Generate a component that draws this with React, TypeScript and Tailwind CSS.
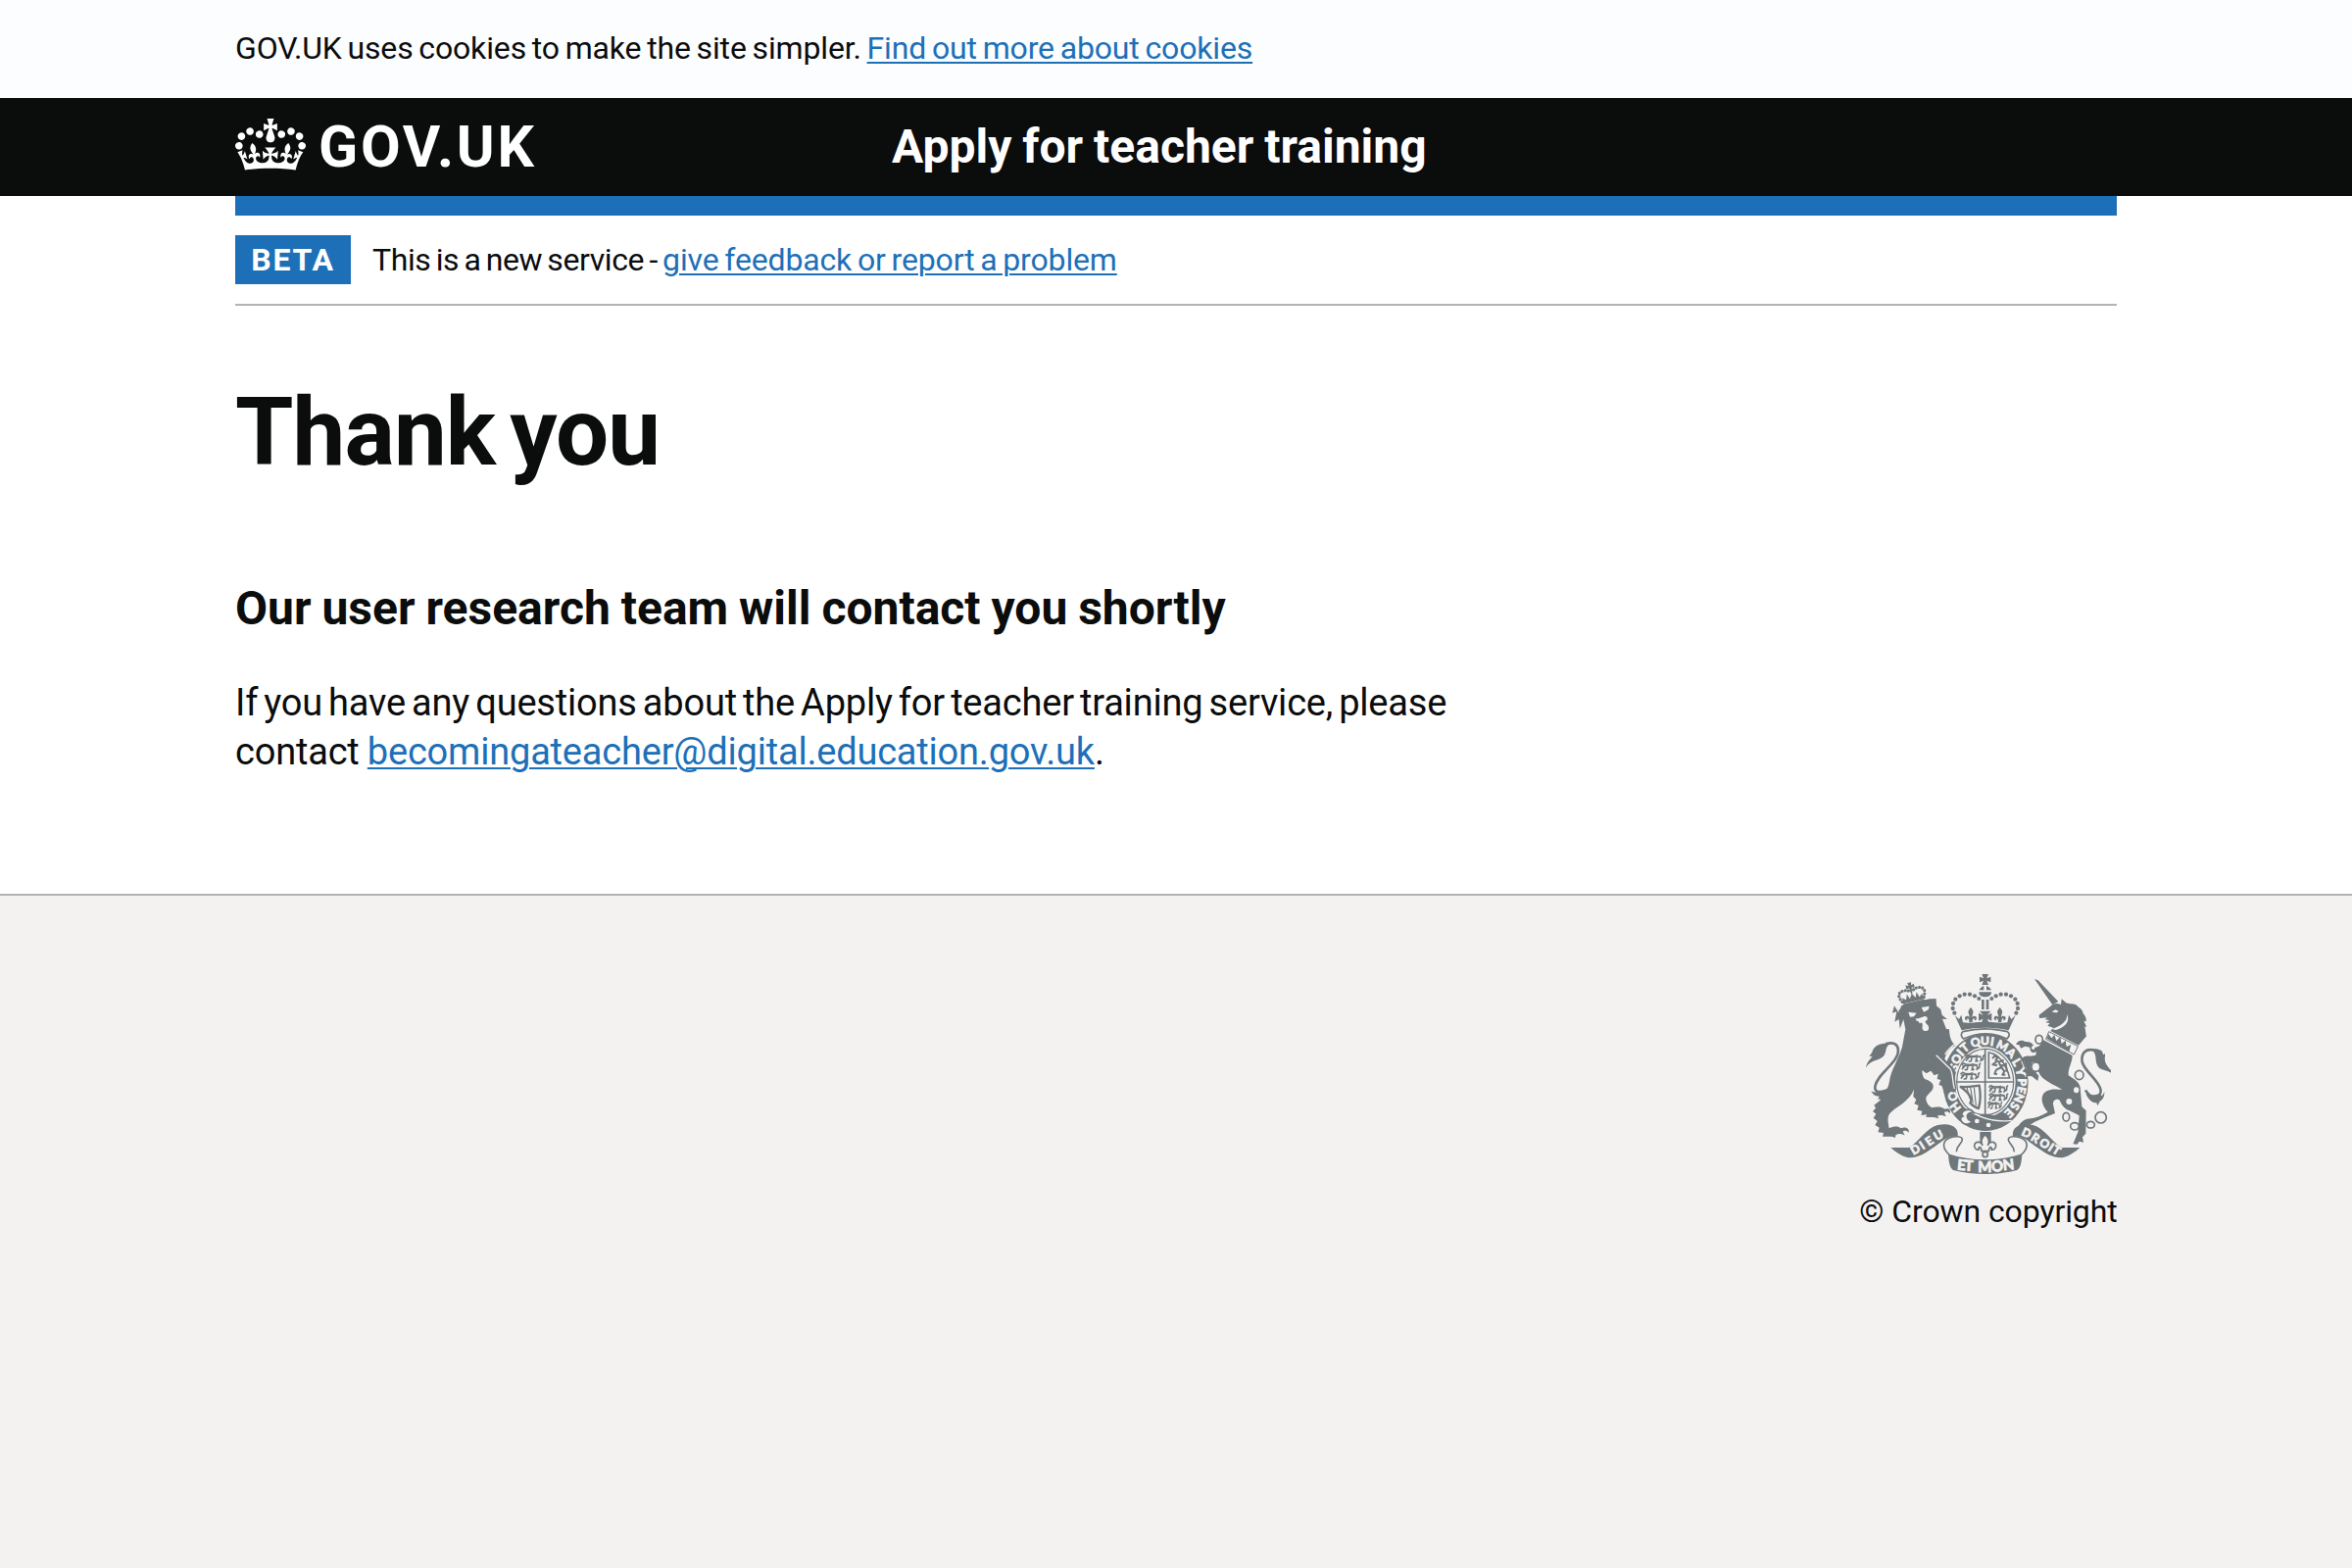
import React from "react";

const INK = "#6f777b";
const PAPER = "#f3f2f1";

function Crown() {
  return (
    <svg viewBox="0 0 132 97" className="mb-[5px] h-[53px] w-[72px] shrink-0" fill="currentColor" aria-hidden="true">
      <path d="M25 30.2c3.5 1.5 7.7-.2 9.1-3.7 1.5-3.6-.2-7.8-3.9-9.2-3.6-1.4-7.6.3-9.1 3.9-1.4 3.5.3 7.5 3.9 9zM9 39.5c3.6 1.5 7.8-.2 9.2-3.7 1.5-3.6-.2-7.8-3.9-9.1-3.6-1.5-7.6.2-9.1 3.8-1.4 3.5.3 7.5 3.8 9zM4.4 57.2c3.5 1.5 7.7-.2 9.1-3.8 1.5-3.6-.2-7.7-3.9-9.1-3.5-1.5-7.6.3-9.1 3.8-1.4 3.5.3 7.6 3.9 9.1zm38.3-21.4c3.5 1.5 7.7-.2 9.1-3.8 1.5-3.6-.2-7.7-3.9-9.1-3.6-1.5-7.6.3-9.1 3.8-1.3 3.6.4 7.7 3.9 9.1zm64.4-5.6c-3.6 1.5-7.8-.2-9.1-3.7-1.5-3.6.2-7.8 3.8-9.2 3.6-1.4 7.7.3 9.2 3.9 1.3 3.5-.4 7.5-3.9 9zm15.9 9.3c-3.6 1.5-7.7-.2-9.1-3.7-1.5-3.6.2-7.8 3.7-9.1 3.6-1.5 7.7.2 9.2 3.8 1.5 3.5-.3 7.5-3.8 9zm4.7 17.7c-3.6 1.5-7.8-.2-9.2-3.8-1.5-3.6.2-7.7 3.9-9.1 3.6-1.5 7.7.3 9.2 3.8 1.3 3.5-.4 7.6-3.9 9.1zM89.3 35.8c-3.6 1.5-7.8-.2-9.2-3.8-1.4-3.6.2-7.7 3.9-9.1 3.6-1.5 7.7.3 9.2 3.8 1.4 3.6-.3 7.7-3.9 9.1zM69.7 17.7l8.9 4.7V9.3l-8.9 2.8c-.2-.3-.5-.6-.9-.9L72.4 0H59.6l3.5 11.2c-.3.3-.6.5-.9.9l-8.8-2.8v13.1l8.8-4.7c.3.3.6.7.9.9l-5 15.4v.1c-.2.8-.4 1.6-.4 2.4 0 4.1 3.1 7.5 7 8.1h.2c.3 0 .7.1 1 .1.4 0 .7 0 1-.1h.2c4-.6 7.1-4.1 7.1-8.1 0-.8-.1-1.7-.4-2.4V34l-5.1-15.4c.4-.2.7-.6 1-.9zM66 92.8c16.9 0 32.8 1.1 47.1 3.2 4-16.9 8.9-26.7 14-33.5l-9.6-3.4c1 4.9 1.1 7.2 0 10.2-1.5-1.4-3-4.3-4.2-8.7L108.6 76c2.8-2 5-3.2 7.5-3.3-4.4 9.4-10 11.9-13.6 11.2-4.3-.8-6.3-4.6-5.6-7.9 1-4.7 5.7-5.9 8-.5 4.3-8.7-3-11.4-7.6-8.8 7.1-7.2 7.9-13.5 2.1-21.1-8 6.1-8.1 12.3-4.5 20.8-4.7-5.4-12.1-2.5-9.5 6.2 3.4-5.2 7.9-2 7.2 3.1-.6 4.3-6.4 7.8-13.5 7.2-10.3-.9-10.9-8-11.2-13.8 2.5-.5 7.1 1.8 11 7.3L80.2 60c-4.1 4.4-8 5.3-12.3 5.4 1.4-4.4 8-11.6 8-11.6H55.5s6.4 7.2 7.9 11.6c-4.2-.1-8-1-12.3-5.4l1.4 16.4c3.9-5.5 8.5-7.7 10.9-7.3-.3 5.8-.9 12.8-11.1 13.8-7.2.6-12.9-2.9-13.5-7.2-.7-5 3.8-8.3 7.1-3.1 2.7-8.7-4.6-11.6-9.4-6.2 3.7-8.5 3.6-14.7-4.6-20.8-5.8 7.6-5 13.9 2.2 21.1-4.7-2.6-11.9.1-7.7 8.8 2.3-5.5 7.1-4.2 8.1.5.7 3.3-1.3 7.1-5.7 7.9-3.5.7-9-1.8-13.5-11.2 2.5.1 4.7 1.3 7.5 3.3l-4.7-15.4c-1.2 4.4-2.7 7.2-4.3 8.7-1.1-3-.9-5.3 0-10.2l-9.5 3.4c5 6.9 9.9 16.7 14 33.5 14.8-2.1 30.8-3.2 47.7-3.2z" />
    </svg>
  );
}

type Glyph = [string, number, number, number];

// Letter, centre x, centre y, rotation in degrees
const garter: Glyph[] = [
  ["H", 346, 479, -128], ["O", 338, 446, -112],
  ["S", 341, 358, -68], ["O", 349, 332, -57], ["I", 361, 312, -47], ["T", 374, 297, -38],
  ["Q", 407, 280, -14], ["U", 436, 275, 0], ["I", 459, 278, 9],
  ["M", 490, 291, 26], ["A", 517, 313, 42], ["L", 534, 341, 60],
  ["Y", 546, 371, 76], ["P", 550, 403, 92], ["E", 548, 427, 103], ["N", 541, 451, 112], ["S", 528, 476, 122], ["E", 511, 497, 134],
];
const sideMottoes: Glyph[] = [
  ["D", 223, 608, -30], ["I", 244, 596, -32], ["E", 266, 583, -35], ["U", 294, 565, -28],
  ["D", 564, 558, 24], ["R", 591, 573, 32], ["O", 619, 590, 33], ["I", 639, 602, 33], ["T", 656, 611, 31],
];
const baseMotto: Glyph[] = [
  ["E", 365, 656, 6], ["T", 387, 658, 3], ["M", 436, 661, 0], ["O", 474, 659, -3], ["N", 508, 655, -6],
];

function Letters({ glyphs, size }: { glyphs: Glyph[]; size: number }) {
  return (
    <g fill={PAPER} stroke={PAPER} strokeWidth="2.5" fontFamily="Lato, sans-serif" fontWeight={700} fontSize={size} textAnchor="middle">
      {glyphs.map(([ch, x, y, r], i) => (
        <text key={i} transform={`translate(${x} ${y}) rotate(${r})`} y={size * 0.36}>{ch}</text>
      ))}
    </g>
  );
}

const beads: [number, number][] = [
  [405, 139], [390, 134], [374, 134], [359, 139], [346, 149], [339, 162], [338, 177], [343, 191],
];
const lionCrownBeads: [number, number][] = [
  [179, 150], [175, 141], [173, 131], [177, 122], [186, 118], [196, 118], [205, 121],
  [221, 121], [230, 118], [240, 118], [249, 122], [253, 131], [251, 141], [247, 150],
];

function Passant({ x, y }: { x: number; y: number }) {
  return (
    <g transform={`translate(${x} ${y})`} fill="none" stroke={INK} strokeWidth="5" strokeLinecap="round" strokeLinejoin="round">
      <path d="M0 4l5-4 6 3M3 9c12-5 24-1 42-4M8 9l-7 8M18 9l-2 10-6 1M34 8l-3 7 5 4-6 1M44 6l4 8-3 5M50 16c8-3-2-11 6-15" />
      <path d="M14 3l10 1 12-2" strokeWidth="4" />
    </g>
  );
}

function SmallFleur({ x, y }: { x: number; y: number }) {
  return (
    <path
      transform={`translate(${x} ${y})`}
      d="M0-22c6 7 10 12 6 20-1 4-2 6-2 10 4-6 14-5 14 3 0 5-4 8-8 6 2 0 3-6-1-5-3 1-4 5-4 12H-5c0-7-1-11-4-12-4-1-3 5-1 5-4 2-8-1-8-6 0-8 10-9 14-3 0-4-1-6-2-10-4-8 0-13 6-20z"
    />
  );
}

function CoatOfArms() {
  return (
    <svg viewBox="72 72 750 612" className="h-[204px] w-[250px]" fill={INK} aria-hidden="true">
      {/* Royal crown */}
      <path d="M427 72h20l-5 13 12-5v17l-12-5 5 13h-20l5-13-12 5V80l12 5z" />
      <path d="M433 108v13h-14c2-6 7-10 14-13zm8 0c7 3 12 7 15 13h-15zM418 127h38c1 9-8 15-19 15s-20-6-19-15z" />
      <path d="M426 150h8v30h-8zm14 0h8v30h-8z" />
      {beads.map(([x, y]) => (
        <g key={`${x}-${y}`}>
          <circle cx={x} cy={y} r="6.4" />
          <circle cx={875 - x} cy={y} r="6.4" />
        </g>
      ))}
      <circle cx="418" cy="147" r="6" />
      <circle cx="457" cy="147" r="6" />
      <path d="M420 185h34l-11 13 14-7v24l-13-6 6 19h-26l6-19-13 6v-24l14 7z" />
      <SmallFleur x={393} y={196} />
      <SmallFleur x={482} y={196} />
      <path d="M344 198l13 12 7-13 5 23c22 4 36-2 68-2s46 6 68 2l5-23 7 13 13-12-21 46c-48-10-96-10-144 0z" />
      <path d="M369 248c44-11 92-11 136 0 10 7 5 16-2 22-40-20-88-20-132 0-8-6-10-15-2-22z" fill={PAPER} stroke={INK} strokeWidth="5" />

      {/* Garter and shield */}
      <ellipse cx="438" cy="403" rx="131" ry="149" />
      <ellipse cx="437" cy="402" rx="93" ry="107" fill={PAPER} />
      <ellipse cx="437" cy="402" rx="87" ry="101" fill="none" stroke={INK} strokeWidth="3.5" />
      <path d="M437 300v205M349 402h176" fill="none" stroke={INK} strokeWidth="5" />
      <Passant x={378} y={319} />
      <Passant x={366} y={345} />
      <Passant x={363} y={373} />
      <Passant x={450} y={413} />
      <Passant x={450} y={438} />
      <g transform="translate(446 463) scale(.75 1)"><Passant x={0} y={0} /></g>
      <path d="M448 390V312c26 4 52 28 64 78z" fill="none" stroke={INK} strokeWidth="5" />
      <path d="M459 330l8-8 8 7-6 6 12 6 13-6M473 339l-13 10 14 3M478 342l9 15-16 8-5 12 8 1M488 358l8 12-6 10 9 0M484 350l17 3M500 370c8-8-4-18 2-26" fill="none" stroke={INK} strokeWidth="6" strokeLinejoin="round" />
      <path d="M362 417c18 2 40-2 57-4 4 22 4 48-2 70-10-2-18-8-26-16 10-15-10-36-29-50z" fill="none" stroke={INK} strokeWidth="7" strokeLinejoin="round" />
      <path d="M381 419l9 34M392 419l8 48M403 418l6 56" fill="none" stroke={INK} strokeWidth="3.5" />
      <path d="M428 500h20l22 6-30 10-28-9z" />
      <path d="M386 488c38 27 80 38 132 32" fill="none" stroke={PAPER} strokeWidth="4" />
      <circle cx="412" cy="522" r="7" fill={PAPER} />
      <circle cx="447" cy="534" r="7" fill={PAPER} />
      <path d="M378 488c12-4 20 2 24 9-13-3-21 4-20 11s6 12 14 14c-4 10-20 13-29 4-9-10-5-16 2-19-8-5-1-17 9-19z" fill={PAPER} stroke={INK} strokeWidth="5" />
      <Letters glyphs={garter} size={36} />

      {/* Lion */}
      <path d="M172 190l9-22 85-20h20l1 20 14 12 4 17 16 13-15-1 12 31 9 1c1 24 6 40 20 50-18 6-28 20-34 41l27 28c7 18 4 41 9 62l-7 13-11-6-6 6-6-9-10 2-4-13-10-5 6-14-11-3 3-16-12 5-10-14-14 8-13-10c0 12 2 20 8 27 17 5 28 14 26 26-4 15-20 21-22 32-1 13 9 26 18 30 12-3 27-5 40 4 13-5 18 4 16 14-7-8-14-7-18-4l5 13c-12-5-19-5-27-2 4 3 5 5 4 8-10-5-20-4-38-4l2-8-17 2 3-13-15-3 4-14-13-5 6-13-9-9 2-22c-15 38-55 53-73 72-11 12-5 33-3 47 14-6 27-8 36 0 17-7 27 3 24 13-6-7-13-7-18-4l6 13c-11-6-20-6-28-1l-1 8c-12-7-27-2-39-4l3-11-17-2 4-14-13-8 7-12-12-10 8-12-10-8 9-10-5-9 19-15-2-12c17-11 27-24 30-46 5-36 28-66 39-105l10-54-6-30-11 28-3-29-13 8 6-31-13 4 6-22z" />
      <path d="M172 183l20-14 94-22 2 24-60 20-50 15z" />
      <path d="M202 188l25 3-8 11-12 1zm40-14l24-4-3 11-14 7z" fill={PAPER} />
      <path d="M224 208c8 2 18-5 28-7 8 0 10 7 7 13-7-2-6 5-1 11 9 6 9 20-1 21-10 2-14-6-12-14 2-10-4-14-7-9-5-1-2-7-8-7-4 0-5-4-6-8z" fill={PAPER} />
      <path d="M287 320l43 42c9 10 6 38 13 61" fill="none" stroke={PAPER} strokeWidth="4" />
      <path d="M314 318c10-17 22-28 38-35" fill="none" stroke={PAPER} strokeWidth="4" />
      <g transform="rotate(-13 213 135)">
        <path d="M180 157h68v8h-68z" />
        {lionCrownBeads.map(([x, y]) => (
          <circle key={`${x}-${y}`} cx={x} cy={y} r="4.8" />
        ))}
        <path d="M207 97h12l-2 9 9-3v13l-9-3-2 19h-4l-2-19-9 3v-13l9 3zM181 156l1-18 10 9 6-17 6 16 9-15 9 15 6-16 6 17 10-9 1 18z" />
      </g>
      {/* Lion's tail */}
      <path d="M132 286c29-9 42 4 38 28-4 32-64 64-70 102-2 18 12 22 47 7" fill="none" stroke={INK} strokeWidth="8" />
      <path d="M146 286c-28-7-50 4-55 25l-9 13 10-1c-7 10-18 18-20 36 16-28 45-20 57-40 7-14 2-25 17-33zM88 430c13 8 26-1 35 2l24-10-5 22c-9 10-22 7-34 12l5-10c-9 1-19-3-25-16z" />

      {/* Unicorn */}
      <path d="M588 87l11 4 62 65-18 10z" />
      <path d="M603 207l-1-10 37-28c8-8 18-8 30-4l2-17 14 12c8 4 20 3 29 5l11 10c8 4 11 11 12 18 7 7 10 15 9 24l-7-1 9 18-6-2 5 33-9-4-7 5-10-11-10 6-12-13-40-12c18-3 35-15 38-33-16 15-34 21-48 35l-21-8 7-8-13-2 12-7-14-2 7-6z" />
      <path d="M642 240l50-38 40 10 13 52-22 26-86-44z" />
      <path d="M641 187l12-6 9 5-6 4-9-1z" fill={PAPER} />
      <path d="M640 240c28-8 51-24 47-45 12 20-6 42-34 48z" fill={PAPER} />
      <path d="M632 248l89 45-12 25-86-47z" fill={PAPER} stroke={INK} strokeWidth="3" />
      <path d="M626 269l5-14 9 13 9-10 6 18 12-12 4 21 12-10 3 19 14-6-6 22z" />
      <path d="M616 274l88 47c0 22-14 39-12 61 14 11 38 18 37 48l4 48 13 12-1 70-10 11 3 16-13-3-6 9-13-1 15-36 4-51-30-15c-18-5-25-22-31-33-8-5-20 1-19 13l6 28-35 14-27 12-14 9-3 8-36 2c9-20 25-29 42-29 25-5 38-13 51-20-22-23-26-58 1-66 13-6 31-3 43-3-24-14-65-29-72-53l-15-23c4-23 6-37 15-55z" />
      <path d="M612 306l-29 7c-8-4-9-11-9-17l-15-3-13 6-5-10-10-2c7-15 20-14 29-8 17-2 24 7 29 18l26-9zM612 337l-31 5-5 16 13 10 12 16-3 15-18-14-13-1-13-20 9-3-7-22-8 0c0-15 15-17 27-16l32-5z" />
      <path d="M548 338l9 24-9 4 14 21M536 292l11 9" fill="none" stroke={PAPER} strokeWidth="3" />
      <g fill="none" stroke={INK} strokeWidth="5">
        <ellipse cx="602" cy="272" rx="11" ry="13" />
        <ellipse cx="592" cy="356" rx="13" ry="14" fill={PAPER} />
        <ellipse cx="725" cy="381" rx="13" ry="14" fill={PAPER} />
        <ellipse cx="685" cy="509" rx="10" ry="13" />
        <ellipse cx="711" cy="538" rx="13" ry="11" />
        <ellipse cx="760" cy="533" rx="12" ry="10" />
        <circle cx="791" cy="511" r="17" />
      </g>
      <ellipse cx="716" cy="427" rx="8" ry="9" fill={PAPER} />
      <ellipse cx="694" cy="462" rx="9" ry="9" fill={PAPER} />
      <ellipse cx="584" cy="297" rx="5" ry="6" fill={PAPER} />
      {/* Unicorn's tail */}
      <path d="M775 306c-30-9-45 7-41 35 7 29 54 59 57 87 0 15-6 18-22 18-10 1-17-6-25-19" fill="none" stroke={INK} strokeWidth="8" />
      <path d="M765 305c9-9 23-2 29 2l5 12 5-4c1 18-7 24 18 51v8c-14-9-27-8-36-15-16-14-4-41-21-54zM745 437l21 8 20-7 9 7 7-12c1 17-8 25-14 29l-7 13-3-9c-12 0-24-7-33-29z" />

      {/* Scroll */}
      <path d="M148 603H203C230 590 258 542 292 534C332 525 358 540 353 571C323 562 302 588 277 604C250 624 225 637 198 633C180 628 162 617 148 603z" />
      <path d="M727 603H672C645 590 617 542 583 534C543 525 517 540 522 571C552 562 573 588 598 604C625 624 650 637 677 633C695 628 713 617 727 603z" />
      <path d="M324 622c70 24 156 24 226 0-2 28-4 42-15 50-60 16-136 16-196 0-11-8-13-24-15-50z" />
      <path d="M328 625c-22-18-23-40-4-50 20-9 43-7 43 3 0 14-18 17-18 38M547 625c22-18 23-40 4-50-20-9-43-7-43 3 0 14 18 17 18 38" fill={PAPER} stroke={INK} strokeWidth="5" />
      <Letters glyphs={sideMottoes} size={36} />
      <Letters glyphs={baseMotto} size={45} />
      <path d="M421 555h34v36h-34z" />
      <path d="M437 563c12 12 14 20 8 34 4-15 24-14 25 0 0 9-7 14-14 12 2-5 0-8-4-7-4 2-3 8-4 12h-22c-1-4 0-10-4-12-4-1-6 2-4 7-7 2-14-3-14-12 1-14 21-15 25 0-6-14-4-22 8-34z" fill={PAPER} stroke={INK} strokeWidth="5" />
      <circle cx="437" cy="624" r="8" fill={PAPER} stroke={INK} strokeWidth="5" />
    </svg>
  );
}

const link = "text-[#1d70b8] underline decoration-2 underline-offset-[3px]";

export default function App() {
  return (
    <div className="flex min-h-[1600px] w-[2400px] flex-col bg-white font-['Roboto',sans-serif] text-[#0b0c0c]">
      <div className="flex h-[100px] items-center bg-[#fcfdff] px-[240px] pb-0.5">
        <p className="whitespace-nowrap text-[32px] leading-[40px] tracking-[-0.15px] [word-spacing:-2px]">
          GOV.UK uses cookies to make the site simpler.{" "}
          <a href="#" className={link}>Find out more about cookies</a>
        </p>
      </div>

      <header className="h-[100px] bg-[#0b0c0c] px-[240px] text-white">
        <div className="flex h-full items-center">
          <a href="#" className="flex w-[670px] items-center">
            <Crown />
            <span className="mb-0.5 ml-[13px] whitespace-nowrap text-[59px] font-bold leading-none tracking-[2.8px]">GOV.UK</span>
          </a>
          <a href="#" className="whitespace-nowrap text-[48px] font-bold leading-none [word-spacing:-1px]">Apply for teacher training</a>
        </div>
      </header>

      <div className="mx-[240px] h-5 bg-[#1d70b8]" />

      <div className="mx-[240px] flex h-[92px] items-center border-b-2 border-[#b1b4b6]">
        <strong className="flex h-[50px] w-[118px] items-center justify-center bg-[#1d70b8] text-[32px] font-bold leading-none tracking-[1.8px] text-white">BETA</strong>
        <span className="ml-[22px] whitespace-nowrap text-[32px] leading-[40px]">
          <span className="tracking-[-0.4px] [word-spacing:-2.3px]">This is a new service - </span>
          <a href="#" className={`${link} tracking-[-0.15px] [word-spacing:-2px]`}>give feedback or report a problem</a>
        </span>
      </div>

      <main className="mx-[240px] h-[600px] pt-[79px]">
        <h1 className="text-[96px] font-bold leading-[100px] tracking-[-0.9px] [word-spacing:-8px]">Thank you</h1>
        <h2 className="mt-[100px] text-[48px] font-bold leading-[60px] [word-spacing:-1px]">Our user research team will contact you shortly</h2>
        <p className="mt-[41px] text-[38px] leading-[50px] tracking-[-0.2px] [word-spacing:-3.1px]">
          If you have any questions about the Apply for teacher training service, please
          <br />
          <span className="[word-spacing:-1px]">contact </span>
          <a href="#" className={link}>becomingateacher@digital.education.gov.uk</a>.
        </p>
      </main>

      <footer className="flex grow justify-end border-t-2 border-[#b1b4b6] bg-[#f3f2f1] px-[240px] pt-20">
        <div className="flex w-[262px] flex-col items-center">
          <CoatOfArms />
          <a href="#" className="mt-[18px] whitespace-nowrap text-[32px] leading-[40px] tracking-[-0.1px]">© Crown copyright</a>
        </div>
      </footer>
    </div>
  );
}
